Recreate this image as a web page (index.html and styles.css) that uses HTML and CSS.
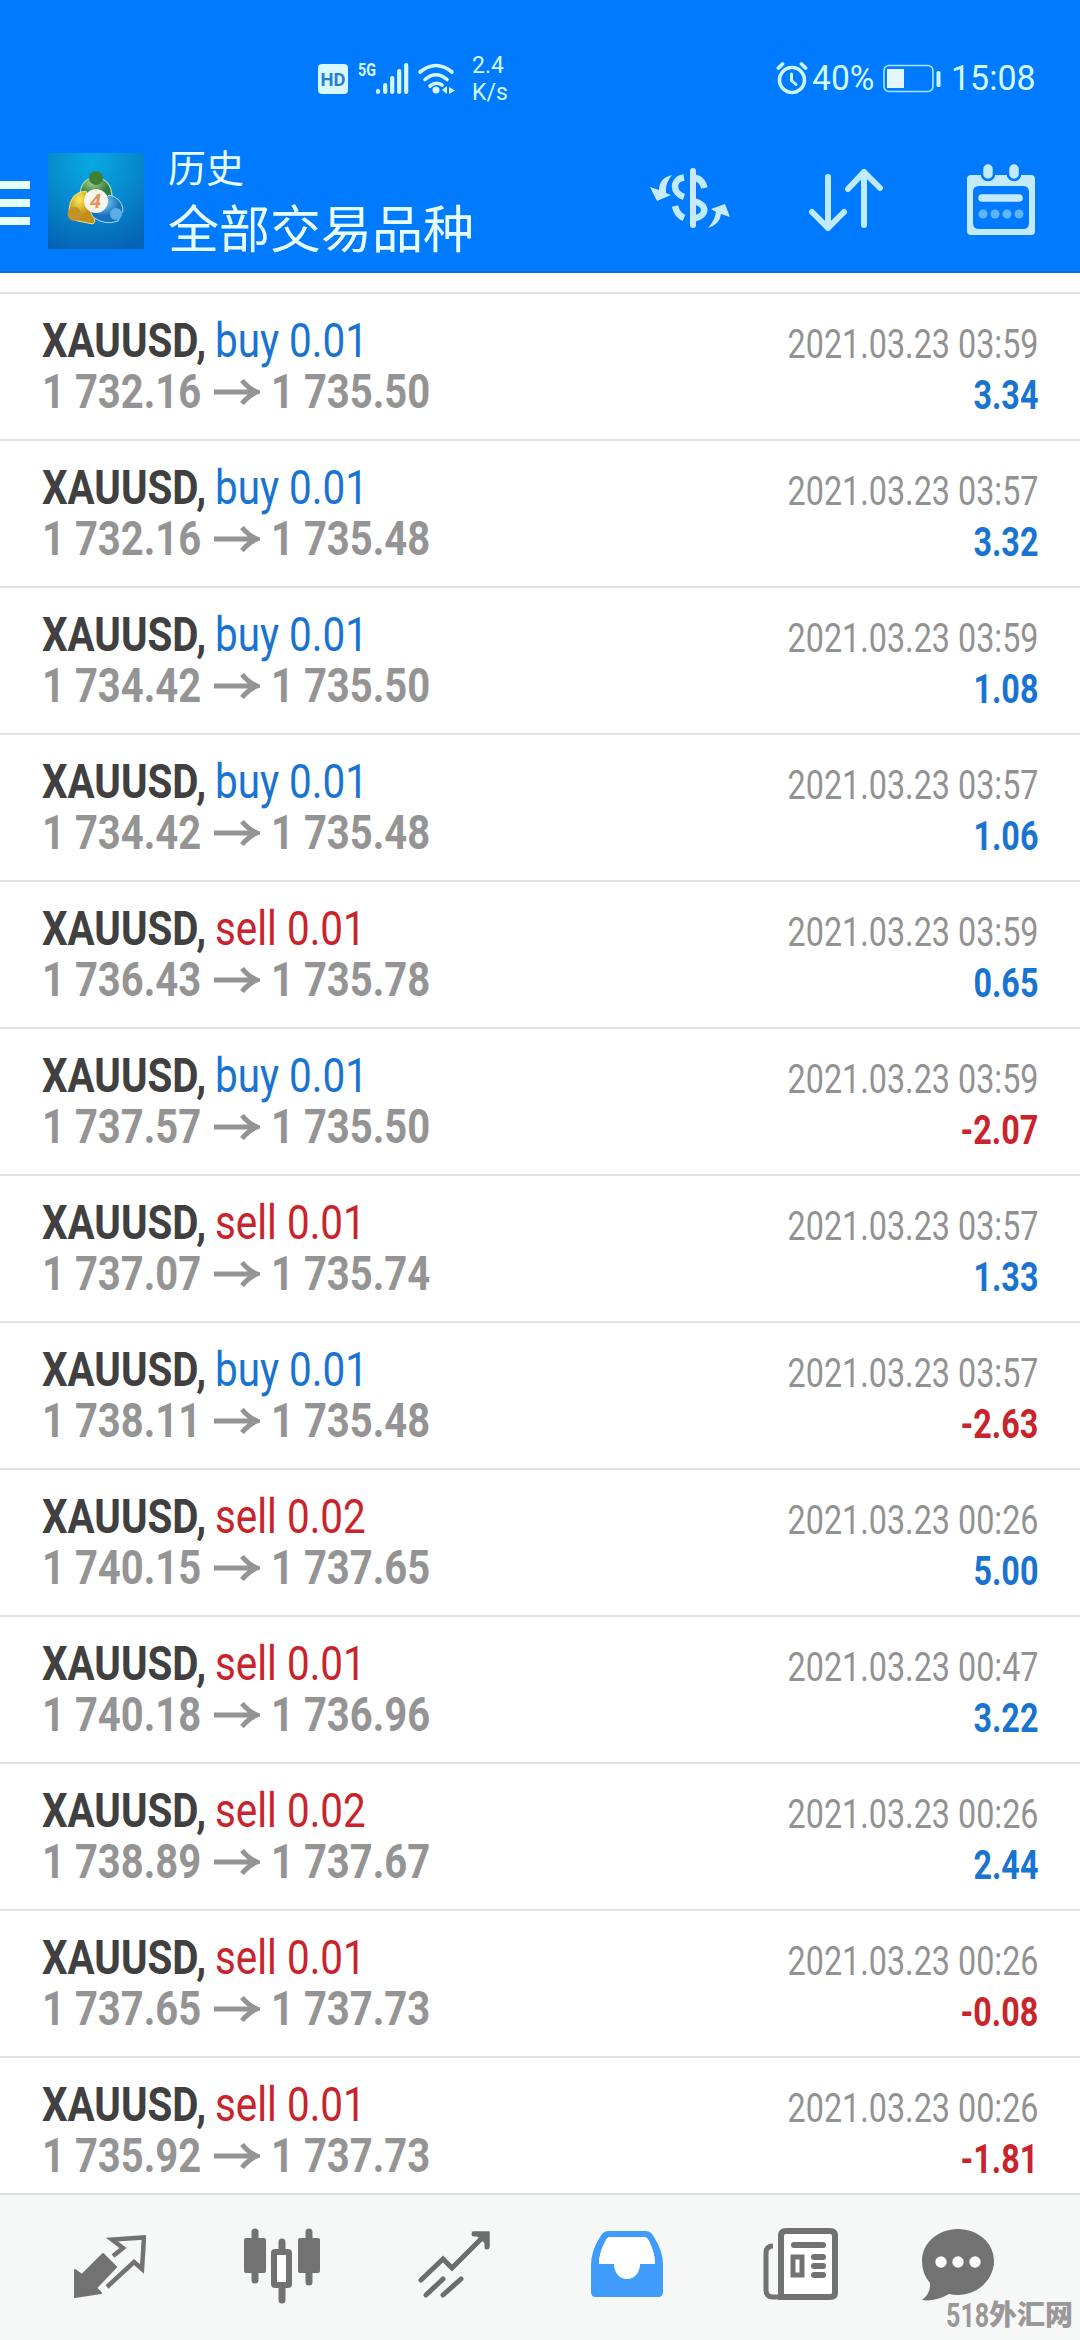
FILE: index.html
```html
<!DOCTYPE html>
<html lang="zh-CN">
<head>
<meta charset="utf-8">
<title>历史</title>
<link rel="stylesheet" href="styles.css">
</head>
<body>
<div class="screen">
<header class="header">
  <div class="status">
    <svg class="signals" width="180" height="44" viewBox="0 0 180 44" fill="#d8f8ff">
      <rect x="0" y="8" width="30" height="30" rx="4"/>
      <text x="2.500" y="30" class="hd" textLength="25" lengthAdjust="spacingAndGlyphs">HD</text>
      <text x="40" y="20" class="g5" textLength="18" lengthAdjust="spacingAndGlyphs">5G</text>
      <g stroke="#d8f8ff" stroke-width="4.200" stroke-linecap="round"><path d="M60 35v1M67.200 29v7M74.200 22v14M81.200 15v21M88.200 9v27"/></g>
      <g fill="none" stroke="#d8f8ff" stroke-width="3.600" stroke-linecap="round"><path d="M102 16Q118 3 134 16M107 23.500Q118 14 129 23.500M112 30Q118 25 124 29"/></g>
      <circle cx="118" cy="34" r="3.500"/><path d="M124 34l5-4v8zM131 31l6 3.500-6 3.500z"/>
    </svg>
    <div class="speed"><span>2.4</span><span>K/s</span></div>
    <svg class="alarm" width="32" height="34" viewBox="0 0 32 34" fill="none" stroke="#c8faff" stroke-linecap="round"><circle cx="16" cy="19" r="12.500" stroke-width="3.600"/><path d="M15.500 13v6.500l4.500 4" stroke-width="3"/><path d="M2.500 7l4-4M29.500 7l-4-4" stroke-width="3.800"/></svg>
    <span class="pct">40%</span>
    <svg class="battery" width="58" height="30" viewBox="0 0 58 30"><rect x="1" y="1.500" width="49" height="26" rx="5" fill="none" stroke="#a8e8ff" stroke-width="1.600"/><rect x="4" y="5" width="17" height="19" fill="#e4f6ff"/><rect x="53.500" y="7" width="4" height="16" rx="1.500" fill="#c8faff"/></svg>
    <span class="clock">15:08</span>
  </div>
  <div class="toolbar">
    <svg class="menu" width="30" height="46" viewBox="0 0 30 46" fill="#e6ffff"><path d="M0 1h30v8H0zM0 19h30v8H0zM0 37h30v8H0z"/></svg>
    <svg class="logo" width="96" height="96" viewBox="0 0 96 96">
      <defs>
        <radialGradient id="sky" cx=".45" cy=".1" r=".95"><stop offset="0" stop-color="#08a9e4"/><stop offset=".5" stop-color="#0789ce"/><stop offset="1" stop-color="#0563b5"/></radialGradient>
        <radialGradient id="green" cx=".4" cy=".25"><stop offset="0" stop-color="#a7d38b"/><stop offset="1" stop-color="#2e7c3c"/></radialGradient>
        <radialGradient id="gold" cx=".4" cy=".25"><stop offset="0" stop-color="#f8ee55"/><stop offset="1" stop-color="#c58c16"/></radialGradient>
        <radialGradient id="blue" cx=".4" cy=".25"><stop offset="0" stop-color="#8dd2f5"/><stop offset="1" stop-color="#1970be"/></radialGradient>
      </defs>
      <rect width="96" height="96" fill="url(#sky)"/>
      <path d="M32 44Q32 25 48 24Q65 27 64 47Z" fill="url(#green)" stroke="#b9dfb1" stroke-width="1.200"/>
      <path d="M38 38Q22 39 21 57L25 67L45 71Q50 67 42 57Z" fill="url(#gold)" stroke="#f6e879"/>
      <path d="M61 42Q74 45 75 57L70 68Q57 73 45 64L42 58Z" fill="url(#blue)" stroke="#a6dcf5"/>
      <circle cx="48" cy="25" r="7" fill="#417f37"/><circle cx="26.500" cy="61" r="7" fill="#c3932b"/><circle cx="68" cy="61" r="6" fill="#58aee5"/>
      <circle cx="48" cy="48" r="12" fill="#f7f3ed"/><text x="42" y="55" class="four">4</text>
    </svg>
    <div class="titles"><span class="sub">历史</span><span class="main">全部交易品种</span></div>
    <svg class="money" width="80" height="62" viewBox="0 0 80 62"><g fill="none" stroke="#bfeaff" stroke-width="6.500"><path d="M34 9.500C22 11 22 25 34 29"/><path d="M43 9.500Q52 10 54.500 20"/><path d="M43 33C58 36 58 48 43 51"/><path d="M25 38Q27 47 34 50"/></g><path d="M43 3v54" stroke="#cde8fb" stroke-width="6" stroke-linecap="round"/><path fill="#c8ebff" d="M22 7Q9 10 9 22L0 19L7 33L21 27L16 25Q15 15 22 7ZM58 60Q70 56 71 46L80 49L75 36L61 41L66 44Q65 52 58 60Z"/></svg>
    <svg class="sort" width="76" height="66" viewBox="0 0 76 66" fill="none" stroke="#bfeaff" stroke-width="6" stroke-linecap="round" stroke-linejoin="round"><path d="M20 10v51M4 45l16 16 16-16M56 58V5M40 22L56 5l16 16"/></svg>
    <svg class="calendar" width="70" height="74" viewBox="0 0 70 74"><path fill="#c3eaff" fill-rule="evenodd" d="M5 12H15Q16 17 22 17T29 12H41Q42 17 48 17T55 12H65Q69 12 69 16V68Q69 72 65 72H5Q1 72 1 68V16Q1 12 5 12ZM13 23Q7 23 7 29V60Q7 66 13 66H57Q63 66 63 60V29Q63 23 57 23Z"/><g fill="#c3eaff" stroke="#007aff" stroke-width="2.500"><rect x="16" y="0" width="12" height="17" rx="6"/><rect x="42" y="0" width="12" height="17" rx="6"/></g><path d="M16 35h37" stroke="#c3eaff" stroke-width="7.500" stroke-linecap="round"/><g fill="#5db4ff"><circle cx="17" cy="51" r="4.500"/><circle cx="29" cy="51" r="4.500"/><circle cx="41" cy="51" r="4.500"/><circle cx="53" cy="51" r="4.500"/></g></svg>
  </div>
</header>
<main class="list">
<article class="deal"><div class="line"><b class="symbol">XAUUSD,</b><span class="side buy">buy 0.01</span><time>2021.03.23 03:59</time></div><div class="line"><b class="price">1 732.16</b><svg class="arrow" viewBox="0 0 46 26"><path d="M0 13h43M28 1.500Q35 10 43 13Q35 16 28 24.500"/></svg><b class="price">1 735.50</b><b class="profit buy">3.34</b></div></article>
<article class="deal"><div class="line"><b class="symbol">XAUUSD,</b><span class="side buy">buy 0.01</span><time>2021.03.23 03:57</time></div><div class="line"><b class="price">1 732.16</b><svg class="arrow" viewBox="0 0 46 26"><path d="M0 13h43M28 1.500Q35 10 43 13Q35 16 28 24.500"/></svg><b class="price">1 735.48</b><b class="profit buy">3.32</b></div></article>
<article class="deal"><div class="line"><b class="symbol">XAUUSD,</b><span class="side buy">buy 0.01</span><time>2021.03.23 03:59</time></div><div class="line"><b class="price">1 734.42</b><svg class="arrow" viewBox="0 0 46 26"><path d="M0 13h43M28 1.500Q35 10 43 13Q35 16 28 24.500"/></svg><b class="price">1 735.50</b><b class="profit buy">1.08</b></div></article>
<article class="deal"><div class="line"><b class="symbol">XAUUSD,</b><span class="side buy">buy 0.01</span><time>2021.03.23 03:57</time></div><div class="line"><b class="price">1 734.42</b><svg class="arrow" viewBox="0 0 46 26"><path d="M0 13h43M28 1.500Q35 10 43 13Q35 16 28 24.500"/></svg><b class="price">1 735.48</b><b class="profit buy">1.06</b></div></article>
<article class="deal"><div class="line"><b class="symbol">XAUUSD,</b><span class="side sell">sell 0.01</span><time>2021.03.23 03:59</time></div><div class="line"><b class="price">1 736.43</b><svg class="arrow" viewBox="0 0 46 26"><path d="M0 13h43M28 1.500Q35 10 43 13Q35 16 28 24.500"/></svg><b class="price">1 735.78</b><b class="profit buy">0.65</b></div></article>
<article class="deal"><div class="line"><b class="symbol">XAUUSD,</b><span class="side buy">buy 0.01</span><time>2021.03.23 03:59</time></div><div class="line"><b class="price">1 737.57</b><svg class="arrow" viewBox="0 0 46 26"><path d="M0 13h43M28 1.500Q35 10 43 13Q35 16 28 24.500"/></svg><b class="price">1 735.50</b><b class="profit sell">-2.07</b></div></article>
<article class="deal"><div class="line"><b class="symbol">XAUUSD,</b><span class="side sell">sell 0.01</span><time>2021.03.23 03:57</time></div><div class="line"><b class="price">1 737.07</b><svg class="arrow" viewBox="0 0 46 26"><path d="M0 13h43M28 1.500Q35 10 43 13Q35 16 28 24.500"/></svg><b class="price">1 735.74</b><b class="profit buy">1.33</b></div></article>
<article class="deal"><div class="line"><b class="symbol">XAUUSD,</b><span class="side buy">buy 0.01</span><time>2021.03.23 03:57</time></div><div class="line"><b class="price">1 738.11</b><svg class="arrow" viewBox="0 0 46 26"><path d="M0 13h43M28 1.500Q35 10 43 13Q35 16 28 24.500"/></svg><b class="price">1 735.48</b><b class="profit sell">-2.63</b></div></article>
<article class="deal"><div class="line"><b class="symbol">XAUUSD,</b><span class="side sell">sell 0.02</span><time>2021.03.23 00:26</time></div><div class="line"><b class="price">1 740.15</b><svg class="arrow" viewBox="0 0 46 26"><path d="M0 13h43M28 1.500Q35 10 43 13Q35 16 28 24.500"/></svg><b class="price">1 737.65</b><b class="profit buy">5.00</b></div></article>
<article class="deal"><div class="line"><b class="symbol">XAUUSD,</b><span class="side sell">sell 0.01</span><time>2021.03.23 00:47</time></div><div class="line"><b class="price">1 740.18</b><svg class="arrow" viewBox="0 0 46 26"><path d="M0 13h43M28 1.500Q35 10 43 13Q35 16 28 24.500"/></svg><b class="price">1 736.96</b><b class="profit buy">3.22</b></div></article>
<article class="deal"><div class="line"><b class="symbol">XAUUSD,</b><span class="side sell">sell 0.02</span><time>2021.03.23 00:26</time></div><div class="line"><b class="price">1 738.89</b><svg class="arrow" viewBox="0 0 46 26"><path d="M0 13h43M28 1.500Q35 10 43 13Q35 16 28 24.500"/></svg><b class="price">1 737.67</b><b class="profit buy">2.44</b></div></article>
<article class="deal"><div class="line"><b class="symbol">XAUUSD,</b><span class="side sell">sell 0.01</span><time>2021.03.23 00:26</time></div><div class="line"><b class="price">1 737.65</b><svg class="arrow" viewBox="0 0 46 26"><path d="M0 13h43M28 1.500Q35 10 43 13Q35 16 28 24.500"/></svg><b class="price">1 737.73</b><b class="profit sell">-0.08</b></div></article>
<article class="deal"><div class="line"><b class="symbol">XAUUSD,</b><span class="side sell">sell 0.01</span><time>2021.03.23 00:26</time></div><div class="line"><b class="price">1 735.92</b><svg class="arrow" viewBox="0 0 46 26"><path d="M0 13h43M28 1.500Q35 10 43 13Q35 16 28 24.500"/></svg><b class="price">1 737.73</b><b class="profit sell">-1.81</b></div></article>
</main>
<nav class="tabs">
  <svg class="t1" width="72" height="64" viewBox="0 0 72 64"><path fill="#727272" stroke="#727272" stroke-width="2" stroke-linejoin="round" d="M1 35L8 40L29 19L42 32L22 53L27 58L1 62Z"/><path fill="none" stroke="#727272" stroke-width="4.500" d="M39 21L49 13L38 4.500L70 2.500L68 34L60 27L33 52"/></svg>
  <svg class="t2" width="76" height="76" viewBox="0 0 76 76"><g fill="#727272"><rect x="0" y="10" width="22" height="35" rx="2"/><rect x="54" y="10" width="22" height="35" rx="2"/></g><rect x="30" y="24" width="15" height="33" rx="1" fill="#fff" stroke="#727272" stroke-width="6"/><path d="M11 4v48M65 4v50M38 14v7M38 60v12" stroke="#727272" stroke-width="7" stroke-linecap="round"/></svg>
  <svg class="t3" width="72" height="68" viewBox="0 0 72 68" fill="none" stroke="#6d6d6d" stroke-width="5" stroke-linecap="round"><path d="M3 50L25 29L34 38L66 6M56 4H69V17M8 65L25 49M25 65L43 49"/><path d="M60 4H69V12Z" fill="#6d6d6d"/></svg>
  <svg class="t4" width="72" height="66" viewBox="0 0 72 66"><path fill="#409cfb" fill-rule="evenodd" d="M17 0H55Q60 0 63 6Q72 20 72 34V61Q72 66 67 66H5Q0 66 0 61V34Q0 20 9 6Q12 0 17 0ZM19 6Q16 6 14 11Q8 22 8 33H23C24 53 48 53 49 33H64Q64 22 58 10Q56 6 53 6Z"/><path d="M19 6Q16 6 14 11Q8 22 8 33H23C24 53 48 53 49 33H64Q64 22 58 10Q56 6 53 6Z" fill="#fff"/></svg>
  <svg class="t5" width="76" height="74" viewBox="0 0 76 74"><path fill="#fff" stroke="#727272" stroke-width="6" d="M23 3H67Q72 3 72 8V65Q72 69 67 69H18V8Q18 3 23 3Z"/><path fill="none" stroke="#727272" stroke-width="5" d="M10 18Q3 18 3 25V62Q3 69 10 69H20"/><g stroke="#727272" stroke-width="6" stroke-linecap="round"><path d="M31 17h29M51 29h9M51 38h9M51 47h9"/></g><rect x="30" y="29" width="9" height="18" fill="#fff" stroke="#727272" stroke-width="5"/></svg>
  <svg class="t6" width="72" height="74" viewBox="0 0 72 74"><path fill="#727272" d="M36 1C56 1 72 15 72 33S56 67 36 67Q31 67 27 66Q13 74 0 72Q9 65 8 55Q0 46 0 33C0 15 16 1 36 1Z"/><g fill="#fff"><circle cx="19" cy="34" r="5.700"/><circle cx="36" cy="34" r="5.700"/><circle cx="53" cy="34" r="5.700"/></g></svg>
</nav>
<div class="watermark"><span>518</span><span class="wm-cn">外汇网</span></div>
</div>
</body>
</html>
```
FILE: styles.css
```css
* { box-sizing: border-box; }
body { margin: 0; background: #fff; font-family: Roboto, "Noto Sans CJK SC", sans-serif; }
.screen { position: relative; width: 1080px; height: 2340px; display: flex; flex-direction: column; overflow: hidden; }
svg { display: block; flex: none; }
.header { height: 273px; flex: none; background: #007aff; border-bottom: 2px solid #0870d0; }
.status { height: 136px; display: flex; padding: 56px 0 0 318px; color: #d2fbff; }
.hd { font: 700 18px Roboto, sans-serif; fill: #287fd2; }
.g5 { font: 700 19px Roboto, sans-serif; }
.speed { display: flex; flex-direction: column; width: 50px; margin-left: -26px; font-size: 23px; line-height: 27px; margin-top: -4px; }
.alarm { margin: 5px 0 0 254px; }
.pct, .clock { font-size: 35px; line-height: 40px; white-space: nowrap; margin-top: 3px; }
.pct { margin-left: 4px; width: 71px; transform: scaleX(.96); transform-origin: left; }
.battery { margin: 8px 0 0 0; }
.clock { margin-left: 10px; transform: scaleX(.97); transform-origin: left; }
.toolbar { height: 135px; display: flex; }
.menu { margin-top: 44px; }
.logo { margin: 17px 0 0 18px; }
.four { font: italic 700 20px Roboto, sans-serif; fill: #e59158; }
.titles { width: 480px; margin-left: 24px; display: flex; flex-direction: column; color: #e8ffff; }
.sub { font-size: 38px; line-height: 50px; margin-top: 8px; }
.main { font-size: 51px; line-height: 66px; margin-top: 4px; }
.money { margin: 32px 0 0 2px; }
.sort { margin: 31px 0 0 78px; }
.calendar { margin: 27px 0 0 82px; }
.list { padding-top: 19px; flex: 1; overflow: hidden; }
.deal { height: 147px; padding: 22px 43px 0 42px; border-top: 2px solid #e1e2e2; }
.line { height: 51px; display: flex; font-size: 48px; line-height: 50px; white-space: nowrap; }
.symbol { width: 173px; color: #404040; transform: scaleX(.84); transform-origin: left; }
.side { width: 160px; transform: scaleX(.842); transform-origin: left; }
.buy { color: #1873d1; }
.sell { color: #c9232b; }
time, .profit { margin: 6px -1px 0 auto; font-size: 40px; line-height: 45px; transform: scaleX(.808); transform-origin: right; }
time { color: #929292; }
.price { width: 158px; color: #949494; transform: scaleX(.833); transform-origin: left; }
.arrow { width: 46px; height: 26px; margin: 12px 11px 0 14px; fill: none; stroke: #949494; stroke-width: 5; }
.tabs { height: 147px; flex: none; background: #f6f7f7; border-top: 2px solid #dedede; display: flex; padding-left: 74px; }
.t1 { margin-top: 40px; }
.t2 { margin: 33px 0 0 98px; }
.t3 { margin: 35px 0 0 98px; }
.t4 { margin: 36px 0 0 101px; }
.t5 { margin: 33px 0 0 100px; }
.t6 { margin: 33px 0 0 83px; }
.watermark { position: absolute; left: 946px; top: 2296px; height: 40px; display: flex; align-items: center; font-size: 33px; font-weight: 700; line-height: 40px; color: #9a9797; white-space: nowrap; }
.watermark span { transform: scaleX(.76); transform-origin: left; width: 43px; }
.watermark .wm-cn { font-size: 28px; font-weight: 900; transform: none; width: 90px; }
```
